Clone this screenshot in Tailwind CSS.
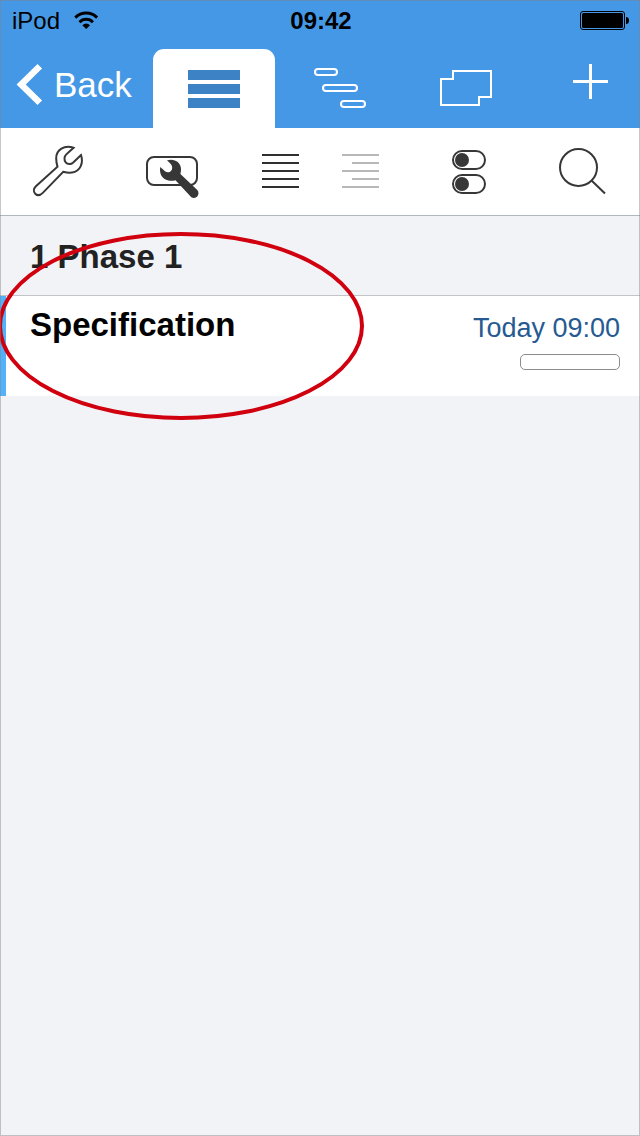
<!DOCTYPE html>
<html lang="en">
<head>
  <meta charset="UTF-8" />
  <meta name="viewport" content="width=device-width, initial-scale=1.0" />
  <title>Project</title>
  <script src="https://cdn.jsdelivr.net/npm/@tailwindcss/browser@4"></script>
</head>
<body class="relative min-h-screen bg-[#f1f3f7] text-black font-['Liberation_Sans',Arial,sans-serif]">
  <header class="bg-[#4598e6]">
    <!-- Status bar -->
    <div class="grid grid-cols-3 items-center h-12 pl-3 pr-[10px] pb-[7px] text-[24px] leading-[29px]">
      <div class="flex items-center gap-[14px]">
        <span>iPod</span>
        <svg class="w-[26px] h-[19px]" viewBox="0 0 26 19" fill="none" stroke="#000" stroke-width="3" aria-hidden="true">
          <path d="M1.3 6.6A15.5 15.5 0 0 1 23.1 6.6" />
          <path d="M5.5 11.3A9 9 0 0 1 18.900 11.3" />
          <path d="M8.3 14.2Q12.2 10.8 16.1 14.2L12.2 18z" fill="#000" stroke="none" />
        </svg>
      </div>
      <span class="text-center font-bold">09:42</span>
      <svg class="justify-self-end w-[50px] h-[19px]" viewBox="0 0 50 19" aria-label="Battery full">
        <rect x="0.5" y="0.5" width="44" height="18" rx="2.5" fill="none" stroke="#000" />
        <rect x="2" y="2" width="41" height="15" rx="1.5" />
        <path d="M46 6a3 3.5 0 0 1 0 7z" />
      </svg>
    </div>

    <!-- Navigation -->
    <nav class="grid grid-cols-[151fr_126fr_126fr_126fr_111fr] h-20">
      <button type="button" class="flex items-center gap-2 h-[73px] pl-4 text-white text-[35px] leading-10">
        <svg class="shrink-0 w-[30px] h-11" viewBox="0 0 30 44" fill="none" stroke="#fff" stroke-width="6.5" aria-hidden="true">
          <path d="M23.800 3.2L5.2 21.500L23.800 39.800" />
        </svg>
        Back
      </button>
      <a href="#list" aria-label="List" class="flex justify-center mt-px mx-[2px] pt-5 bg-white rounded-t-[11px]">
        <svg class="w-[52px] h-10" viewBox="0 0 52 40" fill="#3d82c4">
          <path d="M0 1h52v10H0zM0 15h52v10H0zM0 29h52v10H0z" />
        </svg>
      </a>
      <a href="#gantt" aria-label="Gantt" class="flex justify-center mt-px mx-[2px] pt-5">
        <svg class="w-[52px] h-10 overflow-visible" viewBox="0 0 52 40" fill="none" stroke="#fff" stroke-width="2">
          <rect x="1" y="0" width="22" height="6" rx="3" />
          <rect x="9" y="16" width="34" height="6" rx="3" />
          <rect x="27" y="32" width="24" height="6" rx="3" />
        </svg>
      </a>
      <a href="#board" aria-label="Board" class="flex justify-center mt-px mx-[2px] pt-5">
        <svg class="w-[52px] h-10" viewBox="0 0 52 40" fill="none" stroke="#fff" stroke-width="2">
          <path d="M13 2H51V28H39V36H1V10H13z" />
        </svg>
      </a>
      <button type="button" aria-label="Add" class="flex items-start justify-center pt-4 pl-3">
        <svg class="w-[35px] h-[35px]" viewBox="0 0 35 35" fill="none" stroke="#fff" stroke-width="3">
          <path d="M17.5 0V35M0 17.5H35" />
        </svg>
      </button>
    </nav>
  </header>

  <!-- Toolbar -->
  <div class="grid grid-cols-[115fr_114fr_183fr_114fr_114fr] justify-items-center pt-3 pb-[11px] bg-white border-b border-[#b0b7bf]">
    <button type="button" aria-label="Edit">
      <svg class="w-16 h-16" viewBox="0 0 64 64" fill="none" stroke="#373737" stroke-width="2">
        <path d="M47.5 7.8C38.5 4.8 30 9.5 30.2 18.5C30.2 21.5 30.700 24 31.5 26.8L9.900 46.3C7.5 48.700 7.2 51.700 9.2 53.700C11.5 56 14.5 55.2 16.8 52.900L37.2 31.800C40 32.6 43 33 46 32.6C54.3 31.5 57.700 23 55 15L47 22.8C45 24.6 41.5 24.6 39.700 22.4C37.800 20 38.2 16.4 40.3 14.4z" />
      </svg>
    </button>
    <button type="button" aria-label="Settings">
      <svg class="w-16 h-16" viewBox="0 0 64 64">
        <rect x="7" y="17" width="50" height="28" rx="7" fill="none" stroke="#373737" stroke-width="2" />
        <path d="M27 20.3C34 18 41 22 41 29C41 31 40.800 32.5 40.4 34L57.3 50C60.800 54 56 60.3 51.3 57.3L35.5 40.3C33 40.900 31 41 28.3 40.5C22 39 19 33.5 20.3 27L25 31.3C26.700 32.8 29.5 32.7 31 31C32.7 29.2 32.6 26.5 31 24.3z" fill="#373737" />
      </svg>
    </button>
    <div class="flex gap-[43px]">
      <button type="button" aria-label="Flat list">
        <svg class="w-[37px] h-16" viewBox="0 0 37 64" fill="#322f31">
          <path d="M0 14h37v2H0zM0 22h37v2H0zM0 30h37v2H0zM0 38h37v2H0zM0 46h37v2H0z" />
        </svg>
      </button>
      <button type="button" aria-label="Outline">
        <svg class="w-[37px] h-16" viewBox="0 0 37 64" fill="#b8b8b8">
          <path d="M0 14h37v2H0zM10 22h27v2H10zM0 30h37v2H0zM10 38h27v2H10zM0 46h37v2H0z" />
        </svg>
      </button>
    </div>
    <button type="button" aria-label="Options">
      <svg class="w-16 h-16" viewBox="0 0 64 64" fill="none" stroke="#373737" stroke-width="2">
        <rect x="16" y="11" width="32" height="18" rx="9" />
        <rect x="16" y="35" width="32" height="18" rx="9" />
        <circle cx="25" cy="20" r="7" fill="#373737" stroke="none" />
        <circle cx="25" cy="44" r="7" fill="#373737" stroke="none" />
      </svg>
    </button>
    <button type="button" aria-label="Search">
      <svg class="w-16 h-16" viewBox="0 0 64 64" fill="none" stroke="#373737" stroke-width="2">
        <circle cx="27.5" cy="27.5" r="18.5" />
        <path d="M40.5 40.5L54 53.5" />
      </svg>
    </button>
  </div>

  <!-- Task list -->
  <main class="relative">
    <h2 class="pt-[21px] pb-[18px] pl-[30px] border-b border-[#c3c4c9] text-[#222] text-[33px] leading-10 font-bold">1 Phase 1</h2>
    <ul>
      <li class="flex justify-between h-[100px] pl-6 pr-5 bg-white border-l-6 border-[#51b1fb]">
        <h3 class="pt-[9px] text-[33px] leading-10 font-bold">Specification</h3>
        <div class="flex flex-col items-end gap-[11px] pt-[17px]">
          <time class="text-[#265a91] text-[27px] leading-[30px]">Today 09:00</time>
          <div role="progressbar" aria-label="Progress" aria-valuenow="0" class="w-[100px] h-4 border border-[#8c8c8c] rounded-[5px]"></div>
        </div>
      </li>
    </ul>

    <!-- Highlight around the first task -->
    <svg class="absolute top-4 left-0 w-[364px] h-[188px] pointer-events-none" viewBox="0 0 364 188" fill="none" aria-hidden="true">
      <ellipse cx="181" cy="94" rx="181" ry="92" stroke="#d0000f" stroke-width="4" />
    </svg>
  </main>

  <div class="absolute inset-0 border border-[#828282]/45 pointer-events-none"></div>
</body>
</html>
